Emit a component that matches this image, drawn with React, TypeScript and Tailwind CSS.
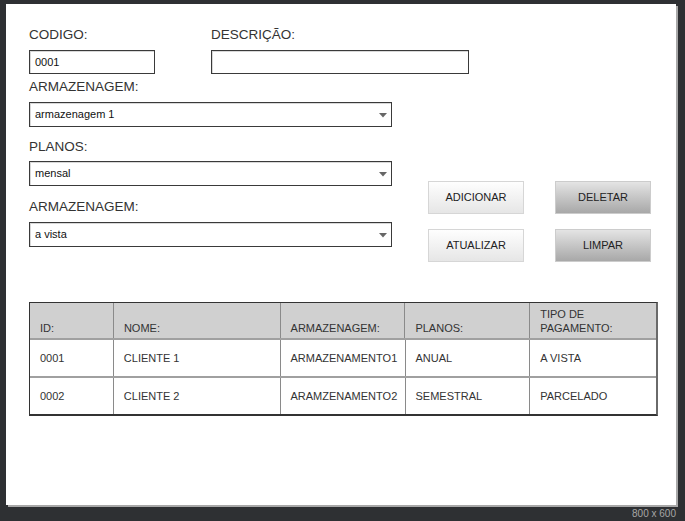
import React from "react";

const font = { fontFamily: '"Liberation Sans", Arial, sans-serif' };

function Label({ children }: { children: React.ReactNode }) {
  return <div className="text-[13.5px] leading-[16px] text-[#333]">{children}</div>;
}

function Select({ value }: { value: string }) {
  return (
    <div className="flex h-[25px] w-[363px] items-center justify-between border border-[#3a3a3a] bg-white pl-[5px] pr-[4px] text-[11px] text-[#111] shadow-[inset_1px_1px_0_#d8d8d8]">
      <span>{value}</span>
      <svg width="8" height="6" viewBox="0 0 8 6">
        <path d="M0 1 H8 L4 5.5 Z" fill="#666" />
      </svg>
    </div>
  );
}

function LightBtn({ children }: { children: React.ReactNode }) {
  return (
    <div className="flex h-[33px] w-[96px] items-center justify-center border border-[#d6d6d6] bg-gradient-to-b from-[#fefefe] to-[#e6e6e6] text-[11px] text-[#222]">
      {children}
    </div>
  );
}

function DarkBtn({ children }: { children: React.ReactNode }) {
  return (
    <div className="flex h-[33px] w-[96px] items-center justify-center border border-[#cccccc] bg-gradient-to-b from-[#e4e4e4] to-[#a8a8a8] text-[11px] text-[#222]">
      {children}
    </div>
  );
}

const widths = ["w-[84px]", "w-[167px]", "w-[125px]", "w-[125px]", "w-[126px]"];

function Row({ cells, last }: { cells: string[]; last?: boolean }) {
  return (
    <div className={`flex ${last ? "h-[36px]" : "h-[38px] border-b-2 border-[#a0a0a0]"}`}>
      {cells.map((c, i) => (
        <div
          key={i}
          className={`${widths[i]} flex items-center px-[10px] text-[11px] text-[#333] ${
            i < 4 ? "border-r border-[#8a8a8a]" : ""
          }`}
        >
          {c}
        </div>
      ))}
    </div>
  );
}

export default function App() {
  const header = ["ID:", "NOME:", "ARMAZENAGEM:", "PLANOS:", "TIPO DE\nPAGAMENTO:"];
  return (
    <div style={font} className="h-[521px] w-[685px] bg-[#2e3033] pl-[6px] pt-[4px]">
      <div className="h-[501px] w-[670px] bg-white pl-[23px] pt-[23px] shadow-[2px_2px_0_#a8a8a8]">
        <div className="flex gap-[56px]">
          <div className="flex flex-col">
            <Label>CODIGO:</Label>
            <div className="mt-[7px] flex h-[24px] w-[126px] items-center border border-[#3a3a3a] pl-[5px] text-[11px] text-[#111] shadow-[inset_1px_1px_0_#d8d8d8]">
              0001
            </div>
          </div>
          <div className="flex flex-col">
            <Label>DESCRIÇÃO:</Label>
            <div className="mt-[7px] h-[24px] w-[258px] border border-[#3a3a3a] shadow-[inset_1px_1px_0_#d8d8d8]" />
          </div>
        </div>

        <div className="mt-[5px] flex items-start">
          <div className="flex flex-col">
            <Label>ARMAZENAGEM:</Label>
            <div className="mt-[7px]">
              <Select value="armazenagem 1" />
            </div>
            <div className="mt-[12px]">
              <Label>PLANOS:</Label>
            </div>
            <div className="mt-[6px]">
              <Select value="mensal" />
            </div>
            <div className="mt-[13px]">
              <Label>ARMAZENAGEM:</Label>
            </div>
            <div className="mt-[7px]">
              <Select value="a vista" />
            </div>
          </div>
          <div className="ml-[36px] mt-[102px] grid grid-cols-[96px_96px] gap-x-[31px] gap-y-[15px]">
            <LightBtn>ADICIONAR</LightBtn>
            <DarkBtn>DELETAR</DarkBtn>
            <LightBtn>ATUALIZAR</LightBtn>
            <DarkBtn>LIMPAR</DarkBtn>
          </div>
        </div>

        <div className="mt-[40px] w-[629px] border-b-2 border-l border-r-2 border-t border-[#333] border-r-[#6a6a6a]">
          <div className="flex h-[37px] border-b-2 border-[#a0a0a0] bg-[#d0d0d0]">
            {header.map((h, i) => (
              <div
                key={i}
                className={`${widths[i]} flex items-end whitespace-pre-line px-[10px] pb-[3px] text-[11px] leading-[14px] text-[#333] ${
                  i < 4 ? "border-r border-[#8a8a8a]" : ""
                }`}
              >
                {h}
              </div>
            ))}
          </div>
          <Row cells={["0001", "CLIENTE 1", "ARMAZENAMENTO1", "ANUAL", "A VISTA"]} />
          <Row cells={["0002", "CLIENTE 2", "ARAMZENAMENTO2", "SEMESTRAL", "PARCELADO"]} last />
        </div>
      </div>
      <div className="flex w-[670px] justify-end pt-[3px] text-[10px] leading-[12px] text-[#a6a6a6]">800 x 600</div>
    </div>
  );
}
